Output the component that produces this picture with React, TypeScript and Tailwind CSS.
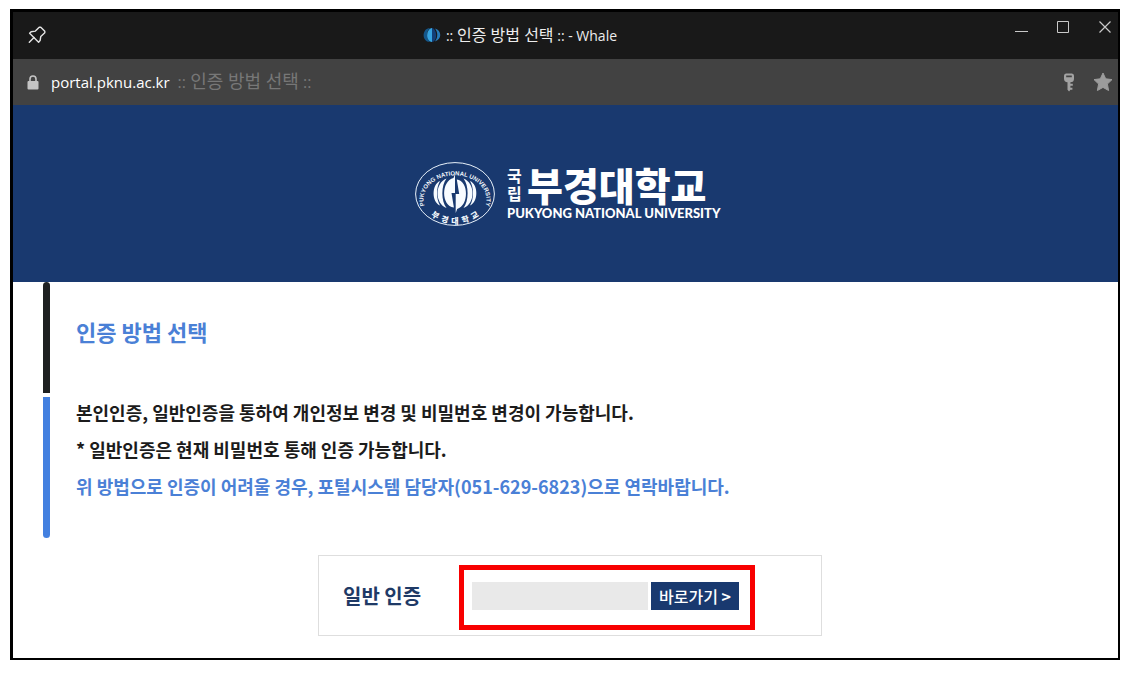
import React from "react";

const KR = "font-['Noto_Sans_CJK_KR',sans-serif]";

function PinIcon() {
  return (
    <svg viewBox="0 0 18 18" className="size-[18px]" fill="none" stroke="#e4e4e4" strokeWidth="1.4" strokeLinejoin="round" strokeLinecap="round">
      <path d="M11.2 1.2h1.6l4 4v1.6l-4 3.6-.7 4.2-1.5 1.6L1.6 7.2l1.5-1.5 4.3-.6z" />
      <path d="M6 11.4l-4.7 4.9" />
    </svg>
  );
}

function LockIcon() {
  return (
    <svg viewBox="0 0 12 15" className="h-[15px] w-3">
      <path d="M3 7V4a3 3 0 0 1 6 0v3" fill="none" stroke="#c4c4c4" strokeWidth="1.6" />
      <rect x="0.5" y="6" width="11" height="8.5" rx="1" fill="#c4c4c4" />
    </svg>
  );
}

function KeyIcon() {
  return (
    <svg viewBox="0 0 12 19" className="h-[19px] w-3" fill="#a2a2a2">
      <path fillRule="evenodd" d="M3 .5h6A2.2 2.2 0 0 1 11 2.7v3A3.6 3.6 0 0 1 7.4 9.3v1.4h2.4v2H7.4v2.1h2v2h-2l-1.3 1.7-1.6-1.7V9.2A3.6 3.6 0 0 1 1 5.7v-3A2.2 2.2 0 0 1 3 .5zM3.2 2.5v1.8h5.6V2.5z" />
    </svg>
  );
}

function StarIcon() {
  return (
    <svg viewBox="0 0 20 20" className="size-5" fill="#9c9c9c" stroke="#9c9c9c" strokeWidth="1" strokeLinejoin="round">
      <path d="M10 1l2.7 5.8 6.3.8-4.6 4.4 1.2 6.5L10 15.4l-5.6 3.1L5.6 12 1 7.6l6.3-.8z" />
    </svg>
  );
}

function Favicon() {
  return (
    <svg viewBox="0 0 20 16" className="h-4 w-5">
      <path d="M8 1C0 1-1 15 8 15 4 11 4 5 8 1z" fill="#14568a" />
      <path d="M10 1C4 2 3 14 10 15z" fill="#36a3e0" />
      <path d="M10 1c5 1 6 13 0 14z" fill="#123f78" />
      <path d="M13 1.600c7 2 7 11 0 12.800 3-4 3-9 0-12.800z" fill="#2779b8" />
    </svg>
  );
}

function Emblem() {
  return (
    <svg viewBox="0 0 80 64" className="h-16 w-20" role="img" aria-label="Pukyong National University">
      <defs>
        <path id="arc-top" d="M12.5 49A31.5 24 0 1 1 67.5 49" />
        <path id="arc-bottom" d="M9 46A34.500 28 0 0 0 71 46" />
      </defs>
      <ellipse cx="40" cy="32" rx="39.4" ry="31.4" fill="none" stroke="#e8f1fa" strokeWidth="1" />
      <text fill="#f2f7fc" className="font-['Liberation_Sans',sans-serif] text-[6px] font-bold">
        <textPath href="#arc-top" startOffset="50%" textAnchor="middle">PUKYONG NATIONAL UNIVERSITY</textPath>
      </text>
      <text fill="#f2f7fc" className={`${KR} text-[8px] font-black`}>
        <textPath href="#arc-bottom" startOffset="50%" textAnchor="middle">{"부\u00a0\u00a0경\u00a0\u00a0대\u00a0\u00a0학\u00a0\u00a0교"}</textPath>
      </text>
      <g fill="#f7fbff">
        <path d="M25 19C16.500 22.500 16.500 40 25 43.500 21 37 21 25.500 25 19z" />
        <path d="M31.500 16.500C19.500 21 19.500 41.500 31.500 46 26 39 26 23.500 31.500 16.500z" />
        <path d="M40 12v19h-3.500l2.400 14.500C26 44 26 19 38.500 16z" />
        <path d="M40.700 51V32h3.500l-2.400-14.500C54 19 54 43.500 42.200 47z" />
        <path d="M48.500 16.500C60.500 21 60.500 41.500 48.500 46 54 39 54 23.500 48.500 16.500z" />
        <path d="M55 19C63.500 22.500 63.500 40 55 43.500 59 37 59 25.500 55 19z" />
      </g>
    </svg>
  );
}

function Logo() {
  return (
    <div className="flex items-center gap-3 text-white">
      <Emblem />
      <div className="flex w-[218px] flex-col">
        <div className="flex items-center gap-1">
          <span className={`${KR} flex w-4 flex-col text-base leading-[18px] font-bold`}>
            <span>국</span>
            <span>립</span>
          </span>
          <span className={`${KR} text-[39px] leading-[38px] font-black whitespace-nowrap`}>부경대학교</span>
        </div>
        <span className="font-['Lato',sans-serif] text-[13px] leading-5 font-black whitespace-nowrap">PUKYONG NATIONAL UNIVERSITY</span>
      </div>
    </div>
  );
}

function TitleBar() {
  return (
    <header className="grid h-[47px] grid-cols-[1fr_auto_1fr] bg-[#191919] text-[#ededed]">
      <div className="flex items-center pb-0.5 pl-[15px]">
        <button aria-label="고정"><PinIcon /></button>
      </div>
      <div className="flex items-center gap-1 pr-23 pb-0.5">
        <Favicon />
        <h1 className="font-['Open_Sans','Noto_Sans_CJK_KR',sans-serif] text-sm whitespace-nowrap">
          :: <span className="text-base">인증 방법 선택</span> :: - Whale
        </h1>
      </div>
      <div className="flex items-start justify-end gap-7 pt-2 pr-1.5">
        <button aria-label="최소화">
          <svg viewBox="0 0 14 14" className="size-3.5" stroke="#c9c9c9"><path d="M1 11.500h13" /></svg>
        </button>
        <button aria-label="최대화">
          <svg viewBox="0 0 14 14" className="size-3.5" fill="none" stroke="#c9c9c9"><path d="M1.500 1.500h11v11h-11z" /></svg>
        </button>
        <button aria-label="닫기">
          <svg viewBox="0 0 14 14" className="size-3.5" fill="none" stroke="#c9c9c9" strokeWidth="1.200"><path d="M1.500 1.500l11 11M12.500 1.500l-11 11" /></svg>
        </button>
      </div>
    </header>
  );
}

function AddressBar() {
  return (
    <div className="flex h-[46px] items-center bg-[#424242] pr-[5px] pl-3.5">
      <LockIcon />
      <p className="ml-3 flex flex-1 items-baseline gap-2 pb-0.5 font-['Open_Sans','Noto_Sans_CJK_KR',sans-serif] whitespace-nowrap">
        <span className="text-[15px] font-medium text-white">portal.pknu.ac.kr</span>
        <span className="text-base text-[#777777]">
          :: <span className="text-lg leading-6">인증 방법 선택</span> ::
        </span>
      </p>
      <div className="flex items-center gap-[18px]">
        <button aria-label="비밀번호"><KeyIcon /></button>
        <button aria-label="즐겨찾기"><StarIcon /></button>
      </div>
    </div>
  );
}

export default function App() {
  return (
    <div className="min-h-screen bg-white px-2.5 pt-[9px] pb-4">
      <div className="border-[3px] border-r-2 border-b-2 border-black bg-white">
        <TitleBar />
        <AddressBar />
        <div className="flex h-[177px] items-center justify-center bg-[#19396f] pl-[9px]">
          <Logo />
        </div>
        <main className={`${KR} pr-[21px] pb-[22px] pl-[30px] font-bold`}>
          <div className="flex flex-col gap-1">
            <section className="flex h-[111px] gap-[26px]">
              <div className="w-[7px] rounded-t-sm bg-[#1e2021]" />
              <h2 className="pt-[33px] text-[22px] leading-8 text-[#4a80d6]">인증 방법 선택</h2>
            </section>
            <section className="flex h-[141px] gap-[26px]">
              <div className="w-[7px] rounded-b-sm bg-[#4380e0]" />
              <div className="-mt-[3px] text-lg leading-[37px] text-[#1c1c1c]">
                <p>본인인증, 일반인증을 통하여 개인정보 변경 및 비밀번호 변경이 가능합니다.</p>
                <p>* 일반인증은 현재 비밀번호 통해 인증 가능합니다.</p>
                <p className="text-[#4a80d6]">위 방법으로 인증이 어려울 경우, 포털시스템 담당자(051-629-6823)으로 연락바랍니다.</p>
              </div>
            </section>
          </div>
          <form className="mx-auto mt-[17px] flex h-[81px] max-w-[504px] items-center border border-[#dedede] pl-6" onSubmit={(e) => e.preventDefault()}>
            <label htmlFor="auth-id" className="w-[116px] text-xl text-[#1f3a66]">일반 인증</label>
            <div className="mt-1 flex h-[65px] items-center gap-[3px] border-5 border-[#f80000] pr-[11px] pb-1 pl-2">
              <input id="auth-id" type="text" className="h-7 w-44 bg-[#e9e9e9] px-2 text-base font-normal outline-none" />
              <button type="submit" className="h-7 w-[88px] bg-[#19396f] text-base leading-7 font-medium whitespace-nowrap text-white">
                바로가기 <span className="font-bold">&gt;</span>
              </button>
            </div>
          </form>
        </main>
      </div>
    </div>
  );
}
